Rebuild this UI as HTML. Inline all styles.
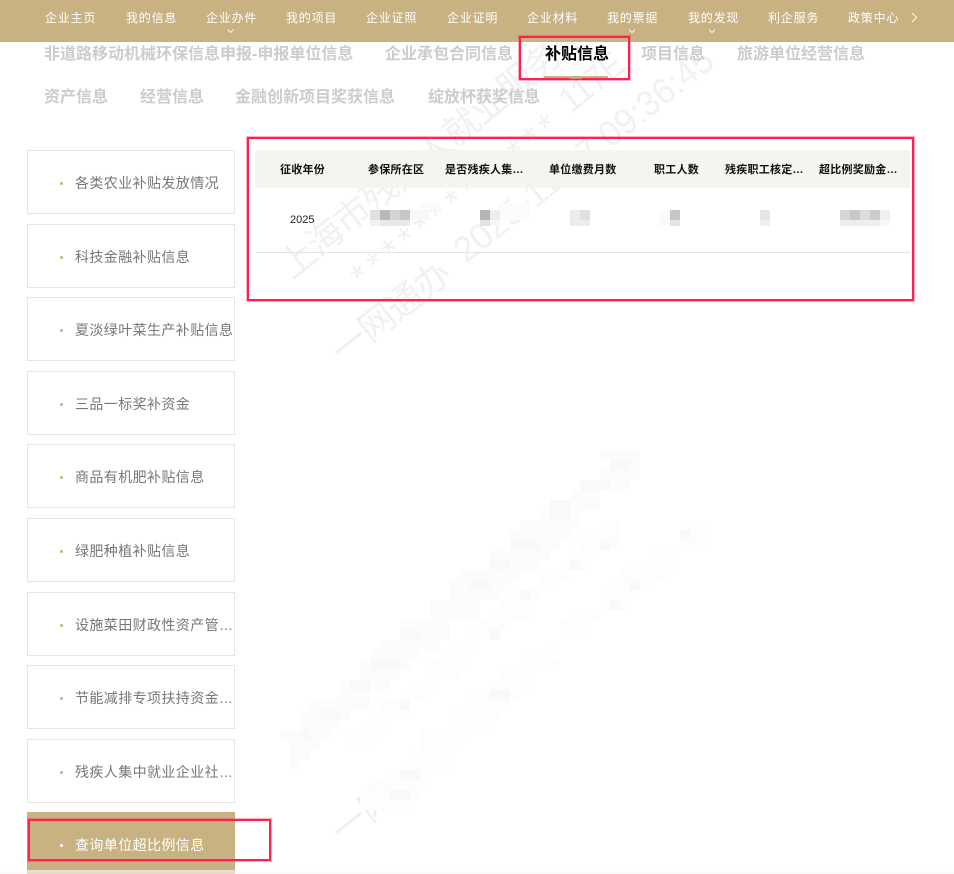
<!DOCTYPE html>
<html lang="zh-CN">
<head>
<meta charset="utf-8">
<title>补贴信息</title>
<style>
html,body{margin:0;padding:0;background:#fff;}
body{width:954px;height:874px;overflow:hidden;position:relative;font-family:"Liberation Sans","WenQuanYi Zen Hei","Noto Sans CJK SC",sans-serif;}
.a{position:absolute;white-space:nowrap;}
.nav{position:absolute;left:0;top:0;width:954px;height:42px;background:#c9b282;z-index:3;}
.nav span{position:absolute;top:10px;font-size:12px;line-height:16px;color:#fff;letter-spacing:.8px;white-space:nowrap;filter:blur(.25px);}
.tab{position:absolute;font-size:16px;line-height:22px;font-weight:bold;color:#ccc;white-space:nowrap;letter-spacing:0;filter:blur(.3px);}
.it{position:absolute;left:27px;width:206px;height:62px;border:1px solid #e5e5e5;background:rgba(255,255,255,.6);z-index:1;}
.it b{position:absolute;left:32px;top:31px;width:3px;height:3px;border-radius:50%;background:#c9b282;}
.it span{position:absolute;left:47px;top:22px;font-size:14px;line-height:20px;color:#777;letter-spacing:.4px;white-space:nowrap;filter:blur(.25px);}
.th{position:absolute;top:162px;font-size:11px;line-height:16px;font-weight:bold;color:#111;white-space:nowrap;letter-spacing:.25px;filter:blur(.25px);}
.rb{position:absolute;border:2px solid #ff1f50;box-shadow:0 0 0 1px rgba(255,31,80,.35);box-sizing:border-box;z-index:5;}
svg{position:absolute;left:0;top:0;}
</style>
</head>
<body>

<svg width="954" height="874" style="z-index:0">
  <g font-family="'Liberation Sans','WenQuanYi Zen Hei','Noto Sans CJK SC',sans-serif" font-size="36" fill="#f1f1f1">
    <text transform="translate(292,280) rotate(-39)" letter-spacing="-1">上海市残疾人就业服务中心</text>
    <text transform="translate(363,290) rotate(-38.700)" letter-spacing="6">*************</text>
    <text transform="translate(571,114) rotate(-38.700)" textLength="72" lengthAdjust="spacingAndGlyphs">117E</text>
    <text transform="translate(343,365) rotate(-38)" letter-spacing="-1">一网通办</text>
    <text transform="translate(466,264) rotate(-38.500)" textLength="320" lengthAdjust="spacingAndGlyphs">2025-11-17 09:36:45</text>
    <text transform="translate(343,845) rotate(-38)" letter-spacing="-1">一网</text>
  </g>
  <path fill="#fcfcfc" d="M600 450h40v10h-40zM610 460h30v10h-30zM600 470h40v10h-40zM580 480h50v10h-50zM570 490h30v10h-30zM550 500h50v10h-50zM540 510h40v10h-40zM520 520h60v10h-60zM510 530h60v10h-60zM510 540h50v10h-50zM490 550h60v10h-60zM490 560h50v10h-50zM460 570h60v10h-60zM450 580h60v10h-60zM450 590h50v10h-50zM430 600h50v10h-50zM430 610h50v10h-50zM400 620h50v10h-50zM400 630h50v10h-50zM380 640h60v10h-60zM370 650h50v10h-50zM360 660h50v10h-50zM360 670h40v10h-40zM340 680h50v10h-50zM340 690h30v10h-30zM310 700h60v10h-60zM300 710h50v10h-50zM300 720h40v10h-40zM280 730h50v10h-50zM290 740h30v10h-30zM290 750h20v10h-20zM290 760h10v10h-10z"/>
  <path fill="#fdfdfd" d="M600 520h20v10h-20zM590 530h30v10h-30zM580 540h40v10h-40zM570 550h30v10h-30zM560 560h30v10h-30zM540 570h30v10h-30zM540 580h20v10h-20zM510 590h30v10h-30zM500 600h30v10h-30zM490 610h40v10h-40zM480 620h30v10h-30zM470 630h20v10h-20zM450 640h30v10h-30zM440 650h30v10h-30zM430 660h40v10h-40zM430 670h30v10h-30zM410 680h30v10h-30zM400 690h30v10h-30zM380 700h30v10h-30zM370 710h40v10h-40zM360 720h30v10h-30zM350 730h30v10h-30zM350 740h20v10h-20z
  M680 520h30v10h-30zM680 530h30v10h-30zM680 540h30v10h-30zM650 550h30v10h-30zM630 560h50v10h-50zM620 570h50v10h-50zM610 580h40v10h-40zM600 590h40v10h-40zM600 600h30v10h-30zM570 610h30v10h-30zM560 620h30v10h-30zM560 630h30v10h-30zM550 640h10v10h-10zM520 650h30v10h-30zM520 660h40v10h-40zM500 670h30v10h-30zM490 680h40v10h-40zM470 690h50v10h-50zM470 700h40v10h-40zM450 710h50v10h-50zM450 720h40v10h-40zM420 730h50v10h-50zM420 740h40v10h-40zM410 750h40v10h-40zM400 760h50v10h-50zM390 770h40v10h-40zM370 780h60v10h-60zM360 790h60v10h-60zM360 800h50v10h-50z"/>
  <path fill="#f9f9f9" d="M610 460h20v10h-20zM580 480h30v10h-30zM550 500h20v10h-20zM550 510h20v10h-20zM510 540h30v10h-30zM490 560h20v10h-20zM470 580h20v10h-20zM400 630h20v10h-20zM370 660h30v10h-30zM350 680h20v10h-20zM320 710h20v10h-20zM300 730h10v10h-10zM680 530h10v10h-10zM600 540h10v10h-10zM570 560h10v10h-10zM520 590h10v10h-10zM490 630h10v10h-10zM400 700h10v10h-10zM630 580h10v10h-10zM610 600h10v10h-10zM490 690h20v10h-20zM400 770h20v10h-20zM390 790h20v10h-20z"/>
</svg>

<div class="nav">
  <span style="left:45px">企业主页</span>
  <span style="left:126px">我的信息</span>
  <span style="left:206px">企业办件</span>
  <span style="left:286px">我的项目</span>
  <span style="left:366px">企业证照</span>
  <span style="left:447px">企业证明</span>
  <span style="left:527px">企业材料</span>
  <span style="left:607px">我的票据</span>
  <span style="left:688px">我的发现</span>
  <span style="left:768px">利企服务</span>
  <span style="left:848px">政策中心</span>
  <svg width="954" height="42" fill="none" stroke="#fff">
    <path d="M227.500 29.500l3 3 3-3M629 29.500l3 3 3-3M709 29.500l3 3 3-3" stroke-width="1" opacity=".85"/>
    <path d="M912 13l4.500 4.500-4.500 4.500" stroke-width="1" opacity=".9"/>
  </svg>
</div>

<div class="tab" style="left:44px;top:44px">非道路移动机械环保信息申报-申报单位信息</div>
<div class="tab" style="left:385px;top:44px">企业承包合同信息</div>
<div class="tab" style="left:545px;top:44px;color:#000">补贴信息</div>
<div class="tab" style="left:641px;top:44px">项目信息</div>
<div class="tab" style="left:737px;top:44px">旅游单位经营信息</div>
<div class="tab" style="left:44px;top:87px">资产信息</div>
<div class="tab" style="left:140px;top:87px">经营信息</div>
<div class="tab" style="left:235px;top:87px">金融创新项目奖获信息</div>
<div class="tab" style="left:428px;top:87px">绽放杯获奖信息</div>
<div class="a" style="left:544px;top:76px;width:64px;height:2px;background:#c9b282;z-index:6"></div>
<div class="a" style="left:570px;top:78px;width:12px;height:1px;background:#d08a6a;z-index:6"></div>

<div class="it" style="top:150px"><b></b><span>各类农业补贴发放情况</span></div>
<div class="it" style="top:224px"><b></b><span>科技金融补贴信息</span></div>
<div class="it" style="top:297px"><b></b><span>夏淡绿叶菜生产补贴信息</span></div>
<div class="it" style="top:371px"><b></b><span>三品一标奖补资金</span></div>
<div class="it" style="top:444px"><b></b><span>商品有机肥补贴信息</span></div>
<div class="it" style="top:518px"><b></b><span>绿肥种植补贴信息</span></div>
<div class="it" style="top:592px"><b></b><span>设施菜田财政性资产管…</span></div>
<div class="it" style="top:665px"><b></b><span>节能减排专项扶持资金…</span></div>
<div class="it" style="top:739px"><b></b><span>残疾人集中就业企业社…</span></div>
<div class="it" style="top:812px;border:0;width:208px;height:62px;background:#c9b282"><b style="left:33px;top:32px;background:#fff"></b><span style="left:48px;top:23px;color:#fff">查询单位超比例信息</span></div>

<div class="a" style="left:255px;top:150px;width:655px;height:38px;background:rgba(244,243,238,.88)"></div>
<div class="th" style="left:280px">征收年份</div>
<div class="th" style="left:368px">参保所在区</div>
<div class="th" style="left:445px">是否残疾人集…</div>
<div class="th" style="left:549px">单位缴费月数</div>
<div class="th" style="left:654px">职工人数</div>
<div class="th" style="left:725px">残疾职工核定…</div>
<div class="th" style="left:819px">超比例奖励金…</div>
<div class="a" style="left:290px;top:212px;font-size:11px;line-height:16px;color:#222">2025</div>
<div class="a" style="left:255px;top:252px;width:655px;height:1px;background:#e4e4e4"></div>

<svg width="954" height="874" style="z-index:2">
  <rect x="420" y="203" width="20" height="7" fill="#fbfbfb"/><rect x="500" y="203" width="30" height="17" fill="#fcfcfc"/>
  <rect x="370" y="210" width="10" height="10" fill="#e0e0e0"/><rect x="380" y="210" width="10" height="10" fill="#b9b9b9"/><rect x="390" y="210" width="10" height="10" fill="#d4d4d4"/><rect x="400" y="210" width="10" height="10" fill="#c6c6c6"/><rect x="410" y="210" width="20" height="10" fill="#f8f8f8"/>
  <rect x="370" y="220" width="10" height="6" fill="#f3f3f3"/><rect x="380" y="220" width="30" height="6" fill="#e8e8e8"/>
  <rect x="480" y="210" width="10" height="10" fill="#b5b5b5"/><rect x="490" y="210" width="10" height="10" fill="#eeeeee"/><rect x="480" y="220" width="10" height="6" fill="#e2e2e2"/><rect x="490" y="220" width="10" height="6" fill="#f6f6f6"/>
  <rect x="570" y="210" width="10" height="16" fill="#ececec"/><rect x="580" y="210" width="10" height="10" fill="#e0e0e0"/><rect x="580" y="220" width="10" height="6" fill="#ececec"/>
  <rect x="670" y="210" width="10" height="10" fill="#c6c6c6"/><rect x="670" y="220" width="10" height="6" fill="#e4e4e4"/><rect x="660" y="210" width="10" height="16" fill="#fafafa"/>
  <rect x="760" y="210" width="10" height="10" fill="#e6e6e6"/><rect x="760" y="220" width="10" height="6" fill="#efefef"/>
  <rect x="840" y="210" width="10" height="10" fill="#d6d6d6"/><rect x="850" y="210" width="10" height="10" fill="#c8c8c8"/><rect x="860" y="210" width="10" height="10" fill="#dcdcdc"/><rect x="870" y="210" width="10" height="10" fill="#cccccc"/><rect x="880" y="210" width="10" height="10" fill="#f0f0f0"/>
  <rect x="840" y="220" width="40" height="6" fill="#eeeeee"/><rect x="880" y="220" width="10" height="6" fill="#f8f8f8"/>
</svg>

<div class="rb" style="left:519px;top:36px;width:111px;height:44px"></div>
<div class="rb" style="left:247px;top:137px;width:667px;height:164px"></div>
<div class="rb" style="left:28px;top:819px;width:243px;height:42px"></div>
<div class="a" style="left:0;top:870px;width:954px;height:4px;background:linear-gradient(#fff,#f6f6f6);z-index:1;opacity:.6"></div>

</body>
</html>
